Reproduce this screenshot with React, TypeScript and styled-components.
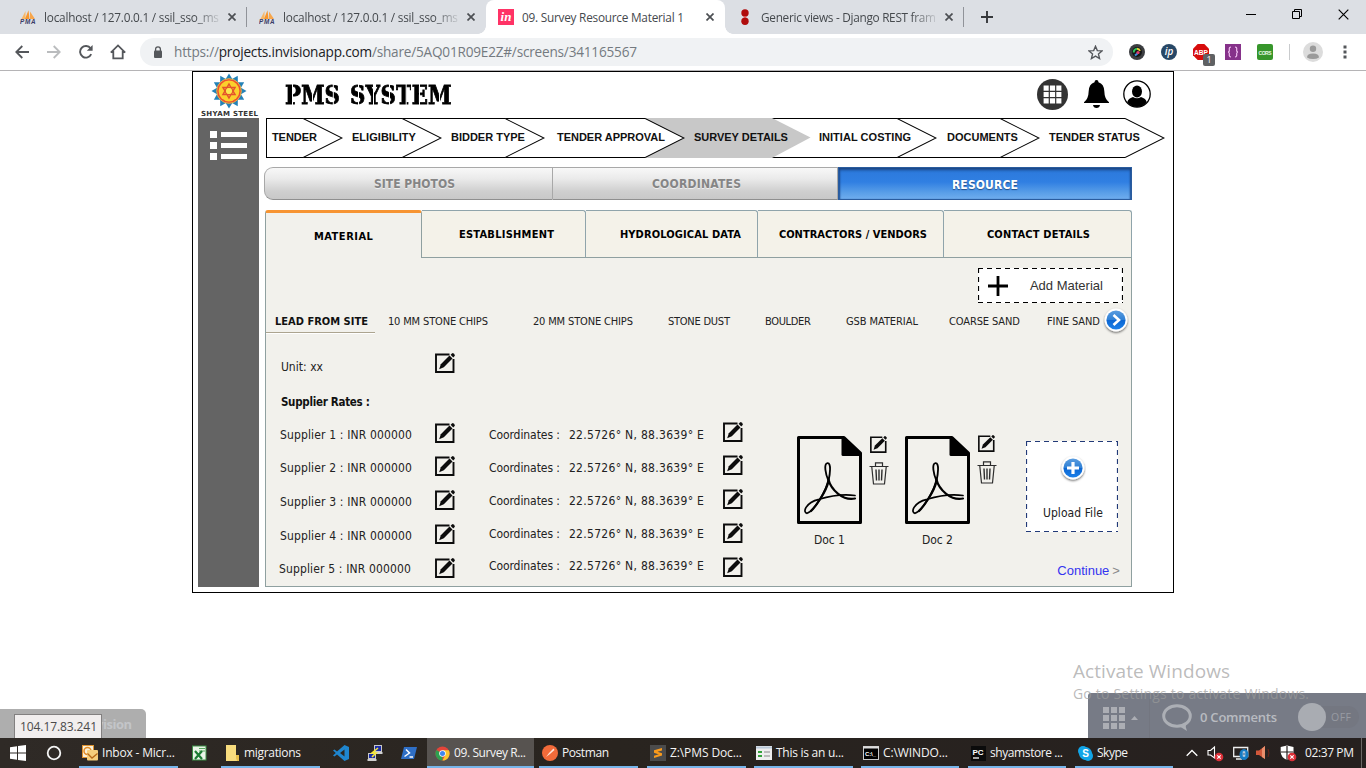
import React, { useLayoutEffect, useRef, useState } from "react";
import styled, { createGlobalStyle, css } from "styled-components";

const GlobalStyle = createGlobalStyle`
  * { box-sizing: border-box; }
  body { margin: 0; background: #fff; overflow: hidden; }
  svg { display: block; flex: none; }
`;

const UI = `"Open Sans", "Noto Sans", sans-serif`;
const TAHOMA = `"DejaVu Sans Condensed", "DejaVu Sans", sans-serif`;
const ARIAL = `"Liberation Sans", Arial, sans-serif`;

/* ---------- text that keeps a fixed run length ---------- */

const Run = styled.span<{ $font: string; $size: number; $weight?: number; $color?: string; $shadow?: string }>`
  display: inline-block;
  width: max-content;
  white-space: pre;
  flex: none;
  font-family: ${(p) => p.$font};
  font-size: ${(p) => p.$size}px;
  font-weight: ${(p) => p.$weight ?? 400};
  color: ${(p) => p.$color ?? "#222"};
  line-height: 16px;
  ${(p) => p.$shadow && css`text-shadow: ${p.$shadow};`}
  ${(p) => p.$font === TAHOMA && css`font-stretch: condensed;`}
`;

type FitProps = {
  w: number;
  children: React.ReactNode;
  font?: string;
  size?: number;
  weight?: number;
  color?: string;
  shadow?: string;
};

function Fit({ w, children, font = TAHOMA, size = 12, weight, color, shadow }: FitProps) {
  const ref = useRef<HTMLSpanElement>(null);
  const [spacing, setSpacing] = useState(0);
  useLayoutEffect(() => {
    const el = ref.current;
    if (!el) return;
    const chars = (el.textContent ?? "").length;
    setSpacing((w - el.getBoundingClientRect().width) / Math.max(1, chars - 1));
  }, [w]);
  return (
    <Run
      ref={ref}
      $font={font}
      $size={size}
      $weight={weight}
      $color={color}
      $shadow={shadow}
      style={{ letterSpacing: spacing, marginRight: -spacing }}
    >
      {children}
    </Run>
  );
}

/* ---------- browser chrome ---------- */

const Screen = styled.div`
  position: relative;
  display: flex;
  flex-direction: column;
  width: 1366px;
  height: 768px;
  overflow: hidden;
  background: #fff;
`;

const TabStrip = styled.div`
  display: flex;
  height: 34px;
  padding-left: 8px;
  background: #dcdfe4;
`;

const Tab = styled.div<{ $active?: boolean; $sep?: boolean }>`
  position: relative;
  display: flex;
  align-items: center;
  width: 239px;
  height: 34px;
  padding: 0 0 0 12px;
  ${(p) =>
    p.$active &&
    css`
      background: #fff;
      border-radius: 8px 8px 0 0;
      &::before,
      &::after {
        content: "";
        position: absolute;
        bottom: 0;
        width: 8px;
        height: 8px;
      }
      &::before {
        left: -8px;
        background: radial-gradient(circle at 0 0, #dcdfe4 7.5px, #fff 8px);
      }
      &::after {
        right: -8px;
        background: radial-gradient(circle at 100% 0, #dcdfe4 7.5px, #fff 8px);
      }
    `}
  ${(p) =>
    p.$sep &&
    css`
      &::after {
        content: "";
        position: absolute;
        right: 0;
        top: 7px;
        width: 1px;
        height: 20px;
        background: #909399;
      }
    `}
`;

const TabTitle = styled.div<{ $fade?: boolean }>`
  width: 176px;
  margin-left: 8px;
  height: 18px;
  ${(p) => p.$fade && css`mask-image: linear-gradient(90deg, #000 150px, transparent 179px);`}
`;

const CloseX = styled.div`
  width: 16px;
  margin-left: 4px;
  display: flex;
  justify-content: center;
`;

const NewTab = styled.div`
  width: 46px;
  display: flex;
  align-items: center;
  justify-content: center;
`;

const WindowControls = styled.div`
  display: flex;
  margin-left: auto;
  height: 28px;
  align-items: center;
`;

const WindowButton = styled.div`
  width: 46px;
  display: flex;
  justify-content: center;
`;

const Toolbar = styled.div`
  display: flex;
  align-items: center;
  height: 37px;
  padding: 0 0 0 6px;
  background: #fff;
  border-bottom: 1px solid #b5b4b6;
`;

const ToolButton = styled.div<{ $w?: number }>`
  width: ${(p) => p.$w ?? 32}px;
  display: flex;
  justify-content: center;
  flex: none;
`;

const Omnibox = styled.div`
  display: flex;
  align-items: center;
  width: 973px;
  height: 28px;
  margin-left: 6px;
  padding: 0 10px 0 13px;
  border-radius: 14px;
  background: #f0f2f4;
`;

const Url = styled.div`
  flex: 1;
  margin-left: 11px;
  & b {
    font-weight: 400;
    color: #202124;
  }
`;

const Extension = styled.div`
  position: relative;
  display: flex;
  justify-content: center;
  width: 32px;
`;

const RoundExt = styled.div<{ $bg: string }>`
  width: 16px;
  height: 16px;
  border-radius: 50%;
  background: ${(p) => p.$bg};
  color: #fff;
  font: italic 600 10px/15px ${UI};
  text-align: center;
`;

const CountBadge = styled.div`
  position: absolute;
  left: 18px;
  top: 10px;
  width: 12px;
  height: 12px;
  border-radius: 2px;
  background: #5f6163;
  color: #fff;
  font: 9px/12px ${UI};
  text-align: center;
`;

const VRule = styled.div<{ $h: number; $color: string }>`
  width: 1px;
  height: ${(p) => p.$h}px;
  background: ${(p) => p.$color};
`;

const Avatar = styled.div`
  width: 20px;
  height: 20px;
  border-radius: 50%;
  background: #dcdcdc;
`;

const PmaIcon = () => (
  <svg width="16" height="16" viewBox="0 0 16 16">
    <path d="M1.5 10 5.5 2v8z" fill="#f8b766" />
    <path d="M5 10 8.5 1.2 9.5 10z" fill="#f8962c" />
    <path d="M10 10V2.5L15 10z" fill="#f7a64c" />
    <text x="0" y="15" fontFamily={ARIAL} fontSize="6.3" fontStyle="italic" fontWeight="700" textLength="15.5" fill="#3b3b66">
      PMA
    </text>
  </svg>
);

const InvisionIcon = () => (
  <svg width="16" height="16" viewBox="0 0 16 16">
    <rect width="16" height="16" fill="#ff3366" />
    <text x="2.6" y="12" fontFamily={`"Liberation Serif", serif`} fontStyle="italic" fontWeight="700" fontSize="13" textLength="11" fill="#fff">
      in
    </text>
  </svg>
);

const DjangoRestIcon = () => (
  <svg width="16" height="16" viewBox="0 0 16 16">
    <circle cx="8" cy="4" r="3.7" fill="#b00c0c" />
    <circle cx="8" cy="12.2" r="3.7" fill="#b00c0c" />
    <rect x="7" y="7" width="2" height="2" fill="#d55" />
  </svg>
);

const Cross = ({ size = 8, color = "#4c4f53", stroke = 1.7 }) => (
  <svg width={size} height={size} viewBox="0 0 8 8">
    <path d="M.5.5l7 7M7.5.5l-7 7" stroke={color} strokeWidth={stroke} fill="none" />
  </svg>
);

type TabData = { icon: React.ReactNode; title: string; w: number; active?: boolean; sep?: boolean; fade?: boolean };

const tabs: TabData[] = [
  { icon: <PmaIcon />, title: "localhost / 127.0.0.1 / ssil_sso_ms", w: 175, sep: true, fade: true },
  { icon: <PmaIcon />, title: "localhost / 127.0.0.1 / ssil_sso_ms", w: 175, fade: true },
  { icon: <InvisionIcon />, title: "09. Survey Resource Material 1", w: 162, active: true },
  { icon: <DjangoRestIcon />, title: "Generic views - Django REST fram", w: 175, sep: true, fade: true },
];

const Browser = () => (
  <>
    <TabStrip>
      {tabs.map((t, i) => (
        <Tab key={i} $active={t.active} $sep={t.sep}>
          {t.icon}
          <TabTitle $fade={t.fade}>
            <Fit w={t.w} font={UI} size={11.8} color="#45494d">{t.title}</Fit>
          </TabTitle>
          <CloseX><Cross /></CloseX>
        </Tab>
      ))}
      <NewTab>
        <svg width="12" height="12" viewBox="0 0 12 12"><path d="M6 0v12M0 6h12" stroke="#36383b" strokeWidth="1.9" /></svg>
      </NewTab>
      <WindowControls>
        <WindowButton><svg width="10" height="10"><path d="M0 5.5h10" stroke="#000" /></svg></WindowButton>
        <WindowButton>
          <svg width="10" height="10"><path d="M.5 2.5h7v7h-7zM2.5 2.5v-2h7v7h-2" fill="none" stroke="#000" /></svg>
        </WindowButton>
        <WindowButton><Cross size={11} color="#000" stroke={0.85} /></WindowButton>
      </WindowControls>
    </TabStrip>
    <Toolbar>
      <ToolButton>
        <svg width="14" height="14" viewBox="0 0 14 14"><path d="M14 7H1.5M7.3 1 1.3 7l6 6" fill="none" stroke="#54575b" strokeWidth="1.8" /></svg>
      </ToolButton>
      <ToolButton>
        <svg width="14" height="14" viewBox="0 0 14 14"><path d="M0 7h12.5M6.7 1l6 6-6 6" fill="none" stroke="#babcbe" strokeWidth="1.8" /></svg>
      </ToolButton>
      <ToolButton>
        <svg width="14" height="14" viewBox="0 0 14 14">
          <path d="M12.2 9.2A5.8 5.8 0 1 1 11.6 3.4" fill="none" stroke="#54575b" strokeWidth="1.9" />
          <path d="M13.6 0v5.8H7.8z" fill="#54575b" />
        </svg>
      </ToolButton>
      <ToolButton>
        <svg width="16" height="16" viewBox="0 0 16 16">
          <path d="M.8 8.6 8 1.4l7.2 7.2M3.3 7v7.4h9.4V7M1.5 8.2h2.6M12 8.2h2.6" fill="none" stroke="#54575b" strokeWidth="1.8" />
        </svg>
      </ToolButton>
      <Omnibox>
        <svg width="10" height="13" viewBox="0 0 10 13">
          <rect x="1" y="4.6" width="8" height="7.4" rx="1" fill="#54575b" />
          <path d="M2.6 5V3.2a2.4 2.4 0 0 1 4.8 0V5" fill="none" stroke="#54575b" strokeWidth="1.3" />
        </svg>
        <Url>
          <Fit w={463} font={UI} size={13.6} color="#747a80">
            https://<b>projects.invisionapp.com</b>/share/5AQ01R09E2Z#/screens/341165567
          </Fit>
        </Url>
        <svg width="15" height="15" viewBox="0 0 24 24">
          <path d="M12 2l2.9 6.9 7.5.6-5.7 4.9 1.8 7.3L12 17.8l-6.5 3.9 1.8-7.3L1.6 9.5l7.5-.6z" fill="none" stroke="#54575b" strokeWidth="2.2" />
        </svg>
      </Omnibox>
      <ToolButton $w={8} />
      <Extension>
        <svg width="16" height="16" viewBox="0 0 16 16">
          <circle cx="8" cy="8" r="8" fill="#3b3d40" />
          <circle cx="8" cy="8" r="5" fill="#161616" />
          <path d="M4.8 8.5A3.3 3.3 0 0 1 8 4.8" stroke="#2fc35c" strokeWidth="2" fill="none" />
          <path d="M8 4.8a3.3 3.3 0 0 1 3 2" stroke="#e9d33a" strokeWidth="2" fill="none" />
          <path d="M8.5 9.5 6 11.5" stroke="#3a8de0" strokeWidth="2" />
          <circle cx="9" cy="8.5" r="1.6" fill="#df3c72" />
        </svg>
      </Extension>
      <Extension><RoundExt $bg="#274766">ip</RoundExt></Extension>
      <Extension>
        <svg width="16" height="16" viewBox="0 0 16 16">
          <path d="M4.7 0h6.6L16 4.7v6.6L11.3 16H4.7L0 11.3V4.7z" fill="#d70c0c" />
          <text x="1" y="10.6" fontFamily={ARIAL} fontWeight="700" fontSize="7.5" textLength="14" lengthAdjust="spacingAndGlyphs" fill="#fff">ABP</text>
        </svg>
        <CountBadge>1</CountBadge>
      </Extension>
      <Extension>
        <svg width="16" height="16" viewBox="0 0 16 16">
          <rect width="16" height="16" fill="#86328a" />
          <path d="M6 3q-2 0-1.7 2.5T3 8q1.6.2 1.3 2.5T6 13M10 3q2 0 1.7 2.5T13 8q-1.6.2-1.3 2.5T10 13" fill="none" stroke="#f0bff0" strokeWidth="1.2" />
        </svg>
      </Extension>
      <Extension>
        <svg width="16" height="16" viewBox="0 0 16 16">
          <rect width="16" height="16" rx="2" fill="#37962b" />
          <text x="1.5" y="10.5" fontFamily={ARIAL} fontWeight="700" fontSize="5" textLength="13" fill="#e8f7e2">CORS</text>
        </svg>
      </Extension>
      <ToolButton $w={17}><VRule $h={16} $color="#c9cbcd" /></ToolButton>
      <ToolButton $w={29}>
        <Avatar>
          <svg width="20" height="20" viewBox="0 0 20 20">
            <circle cx="10" cy="6.7" r="3.2" fill="#9a9a9a" />
            <path d="M4 15.5q0-4 6-4t6 4q-2.4 1.6-6 1.6t-6-1.6z" fill="#9a9a9a" />
          </svg>
        </Avatar>
      </ToolButton>
      <ToolButton $w={35}>
        <svg width="4" height="14"><path d="M.5.5h3v3h-3zM.5 5.5h3v3h-3zM.5 10.5h3v3h-3z" fill="#54575b" /></svg>
      </ToolButton>
    </Toolbar>
  </>
);

/* ---------- application ---------- */

const Frame = styled.div`
  display: flex;
  width: 982px;
  height: 522px;
  margin-left: 192px;
  border: 1px solid #000;
  background: #fff;
`;

const Rail = styled.div`
  display: flex;
  flex-direction: column;
  align-items: center;
  width: 63px;
  height: 515px;
  margin-left: 4px;
`;

const Logo = styled.div`
  display: flex;
  flex-direction: column;
  align-items: center;
  height: 46px;
  padding: 1px 0 0 2px;
`;

const LogoName = styled.div`
  display: flex;
  height: 9px;
  align-items: center;
`;

const Sidebar = styled.div`
  display: flex;
  justify-content: center;
  width: 61px;
  flex: 1;
  padding-top: 13px;
  background: #646464;
`;

const Main = styled.div`
  display: flex;
  flex-direction: column;
  width: 910px;
  margin-left: 4px;
`;

const Header = styled.header`
  display: flex;
  align-items: center;
  height: 46px;
  padding: 0 24px 2px 21px;
`;

const Title = styled.h1`
  display: flex;
  margin: 0;
  flex: 1;
  padding-top: 2px;
  font-family: "DejaVu Serif Condensed", "DejaVu Serif", serif;
  font-stretch: condensed;
  font-size: 26px;
  font-weight: 700;
  line-height: 32px;
  transform: scaleX(0.91);
  transform-origin: 0 0;
`;

const StencilLetter = styled.span<{ $cut: number; $lead?: number }>`
  margin-left: ${(p) => p.$lead ?? 0}px;
  color: transparent;
  -webkit-text-stroke: 0.8px transparent;
  background: linear-gradient(90deg, #000 ${(p) => p.$cut}px, #fff ${(p) => p.$cut}px ${(p) => p.$cut + 1}px, #000 ${(p) => p.$cut + 1}px);
  background-clip: text;
  -webkit-background-clip: text;
`;

const HeaderIcons = styled.div`
  display: flex;
  align-items: center;
`;

const HeaderIcon = styled.div<{ $w: number }>`
  display: flex;
  justify-content: center;
  width: ${(p) => p.$w}px;
`;

const Pipeline = styled.nav`
  display: flex;
  height: 40px;
  margin-left: 2px;
`;

const Step = styled.div<{ $w: number; $pad: number; $current?: boolean; $first?: boolean; $z: number }>`
  position: relative;
  z-index: ${(p) => p.$z};
  display: flex;
  align-items: center;
  width: ${(p) => p.$w}px;
  height: 40px;
  padding: 0 0 3px ${(p) => p.$pad}px;
  background: ${(p) => (p.$current ? "#c8c8c8" : "#fff")};
  border: 0 solid #000;
  border-width: ${(p) => (p.$current ? "0" : "1px 0")};
  ${(p) => p.$first && css`border-left-width: 1px;`}
`;

const Tip = styled.svg<{ $current?: boolean }>`
  position: absolute;
  right: -40px;
  top: ${(p) => (p.$current ? 0 : -1)}px;
`;

const StepLabel = styled.div`
  position: relative;
  z-index: 2;
  display: flex;
`;

const steps = [
  { label: "TENDER", w: 37, pad: 5, tw: 45 },
  { label: "ELIGIBILITY", w: 99, pad: 49, tw: 64 },
  { label: "BIDDER TYPE", w: 103, pad: 49, tw: 74 },
  { label: "TENDER APPROVAL", w: 140, pad: 52, tw: 108 },
  { label: "SURVEY DETAILS", w: 127, pad: 49, tw: 94, current: true },
  { label: "INITIAL COSTING", w: 125, pad: 47, tw: 92 },
  { label: "DOCUMENTS", w: 103, pad: 50, tw: 71 },
  { label: "TENDER STATUS", w: 125, pad: 49, tw: 91 },
];

const Segments = styled.div`
  display: flex;
  width: 868px;
  height: 33px;
  margin-top: 9px;
`;

const Segment = styled.div<{ $w: number; $active?: boolean; $first?: boolean; $dx?: number }>`
  display: flex;
  align-items: center;
  justify-content: center;
  width: ${(p) => p.$w}px;
  padding-left: ${(p) => p.$dx ?? 0}px;
  ${(p) =>
    p.$active
      ? css`
          padding-top: 2px;
          background: linear-gradient(#2b79dc 0, #307fe2 45%, #5a9fe8 80%, #6fadee 100%);
          box-shadow: inset 0 3px 3px -1px #1b437f, inset 2px 0 2px -1px #1d4f95, inset -2px 0 2px -1px #1d4f95;
          border: 1px solid #2a5c9e;
        `
      : css`
          background: linear-gradient(#f8f8f8 0, #eaeaea 35%, #cfcfcf 75%, #c8c8c8 100%);
          border: 1px solid #a8a8a8;
          border-bottom-color: #8f8f8f;
          border-left-width: ${p.$first ? 1 : 0}px;
          border-radius: ${p.$first ? "9px 0 0 9px" : "0"};
        `}
`;

const PanelTabs = styled.div`
  display: flex;
  height: 48px;
  margin: 10px 0 0 1px;
`;

const PanelTab = styled.div<{ $w: number; $active?: boolean; $dx?: number }>`
  display: flex;
  align-items: center;
  justify-content: center;
  width: ${(p) => p.$w}px;
  padding-left: ${(p) => p.$dx ?? 0}px;
  ${(p) =>
    p.$active
      ? css`
          background: #f2f1ec;
          border: 1px solid #8fa0a0;
          border-top: 3px solid #f79432;
          border-bottom: 0;
          border-radius: 3px 3px 0 0;
          padding-top: 3px;
        `
      : css`
          padding-top: 2px;
          background: #f4f2e9;
          border: 1px solid #8fa4ab;
          border-left: 0;
          border-top-right-radius: 3px;
          border-bottom-color: #8fa0a0;
        `}
`;

const Panel = styled.section`
  display: flex;
  flex-direction: column;
  width: 867px;
  height: 329px;
  margin-left: 1px;
  background: #f2f1ec;
  border: 1px solid #8fa0a0;
  border-top: 0;
`;

const DashedBox = styled.div`
  position: relative;
  background: #fff;
  & > svg:first-child {
    position: absolute;
    inset: 0;
  }
`;

const AddMaterial = styled(DashedBox)`
  display: flex;
  align-items: center;
  align-self: flex-end;
  width: 145px;
  height: 35px;
  margin: 10px 8px 0 0;
  padding: 1px 0 0 10px;
  gap: 22px;
`;

const Materials = styled.div`
  display: flex;
  height: 30px;
`;

const MaterialItem = styled.div<{ $lead: number }>`
  display: flex;
  align-items: flex-start;
  margin-left: ${(p) => p.$lead}px;
  padding-top: 11px;
`;

const CurrentMaterial = styled.div`
  display: flex;
  align-items: flex-start;
  width: 109px;
  padding: 11px 0 0 9px;
  border-bottom: 1px solid #aca48f;
  box-shadow: 0 1px 0 #fff;
`;

const NextButton = styled.div`
  margin: 4px 0 0 3px;
`;

const UnitRow = styled.div`
  display: flex;
  align-items: center;
  height: 20px;
  margin: 20px 0 0 15px;
`;

const UnitLabel = styled.div`
  display: flex;
  width: 154px;
  padding-top: 8px;
`;

const RatesHeading = styled.div`
  display: flex;
  margin: 21px 0 0 15px;
  height: 16px;
`;

const RatesArea = styled.div`
  display: flex;
  align-items: flex-start;
  height: 177px;
`;

const Stack = styled.div<{ $lead: number; $top: number; $rows: string; $w?: number }>`
  display: grid;
  grid-template-rows: ${(p) => p.$rows};
  align-items: start;
  width: ${(p) => p.$w}px;
  margin-left: ${(p) => p.$lead}px;
  padding-top: ${(p) => p.$top}px;
  flex: none;
`;

const SupplierRate = styled.div<{ $indent: number }>`
  display: flex;
  padding-left: ${(p) => p.$indent}px;
`;

const Coordinate = styled.div`
  display: flex;
  justify-content: space-between;
`;

const DocCard = styled.div<{ $lead: number }>`
  display: flex;
  width: 93px;
  margin: 26px 0 0 ${(p) => p.$lead}px;
  flex: none;
`;

const DocFile = styled.div`
  display: flex;
  flex-direction: column;
  align-items: center;
  width: 65px;
  gap: 8px;
`;

const DocActions = styled.div<{ $up?: boolean }>`
  display: flex;
  flex-direction: column;
  align-items: center;
  gap: 9px;
  width: 20px;
  margin: ${(p) => (p.$up ? -1 : 0)}px 0 0 7px;
`;

const UploadColumn = styled.div`
  display: flex;
  flex-direction: column;
  align-items: flex-end;
  margin: 31px 0 0 28px;
  flex: none;
`;

const Upload = styled(DashedBox)`
  display: flex;
  flex-direction: column;
  align-items: center;
  justify-content: space-between;
  width: 92px;
  height: 91px;
  padding: 14px 0 11px 2px;
`;

const Continue = styled.div`
  display: flex;
  align-items: center;
  gap: 3px;
  margin: 31px -2px 0 0;
`;

const SunLogo = () => {
  const rays = Array.from({ length: 12 }, (_, i) => i * 30);
  return (
    <svg width="36" height="36" viewBox="-18 -18 36 36">
      {rays.map((a) => (
        <path key={a} d="M-3.6 -11.5 0 -17.5 3.6 -11.5z" fill="#2482b8" transform={`rotate(${a})`} />
      ))}
      <circle r="12.3" fill="#ee4e30" stroke="#dbb54a" strokeWidth="1" />
      <circle r="10.4" fill="#fbd02c" />
      <path d="M0-7 6 3.500H-6zM0 7 6-3.500H-6z" fill="none" stroke="#e4522c" strokeWidth="1.5" />
      <circle r="3" fill="#fbe650" />
    </svg>
  );
};

const EditIcon = ({ size = 20 }: { size?: number }) => (
  <svg width={size} height={size} viewBox="0 0 20 20">
    <path d="M14.500 1.500H1v17.500h17.500V6" fill="none" stroke="#0c0c0c" strokeWidth="1.900" />
    <path d="M5.800 11.300 14.500 2.600l3 3L8.800 14.300l-4.600 2z" fill="#0c0c0c" />
    <path d="M15.600 1.800 17 .4q.8-.6 1.600.1l.9.9q.7.900.1 1.600L18.200 4.400z" fill="#0c0c0c" />
  </svg>
);

const TrashIcon = () => (
  <svg width="20" height="23" viewBox="0 0 20 23">
    <g fill="none" stroke="#2d2d2d" strokeWidth="1.2">
      <path d="M.5 4.500h19M6.500 4V.8h7V4M2.800 5l1.700 17h11l1.700-17" />
      <path d="M7 7.500l.5 11M10 7.500v11M13 7.500l-.5 11" strokeWidth="1.4" />
    </g>
  </svg>
);

const PdfIcon = () => (
  <svg width="65" height="88" viewBox="0 0 65 88">
    <path d="M1.500 1.500H47L63.500 17v69.500h-62z" fill="none" stroke="#000" strokeWidth="3" strokeLinejoin="round" />
    <path d="M44.500 1H47.500L64 18v2H46q-1.500 0-1.500-1.500z" fill="#000" />
    <g fill="none" stroke="#000" strokeLinecap="round">
      <path d="M31.500 45C28.500 38 26.500 27.500 30.500 27.200S33 38 31.500 45" strokeWidth="1.8" />
      <path d="M31.500 43C29.500 55 17 75 10 77.300C5.500 77 8 66.500 22 63.300C36 59 48 58 58 59.500" strokeWidth="1.7" />
      <path d="M31.300 43C34 54 46 65 58 62.500" strokeWidth="2.2" />
      <path d="M31 47C29 55 20 69 14 75" strokeWidth="2.3" />
    </g>
  </svg>
);

const BlueCircle = ({ children, id }: { children: React.ReactNode; id: string }) => (
  <svg width="26" height="28" viewBox="-13 -13 26 28">
    <defs>
      <linearGradient id={id} x1="0" y1="0" x2="0" y2="1">
        <stop offset="0" stopColor="#5b9ddf" />
        <stop offset=".48" stopColor="#2f80d5" />
        <stop offset=".52" stopColor="#0d67d2" />
        <stop offset="1" stopColor="#1b80ea" />
      </linearGradient>
      <filter id={`${id}-shadow`} x="-30%" y="-30%" width="160%" height="160%">
        <feDropShadow dx="0" dy="1.2" stdDeviation="1" floodOpacity=".6" />
      </filter>
    </defs>
    <circle r="11.4" fill="#fff" filter={`url(#${id}-shadow)`} />
    <circle r="9.6" fill={`url(#${id})`} />
    {children}
  </svg>
);

const rows = [1, 2, 3, 4, 5];

const Application = () => (
  <Frame>
    <Rail>
      <Logo>
        <SunLogo />
        <LogoName><Fit w={57} font={`"DejaVu Sans", sans-serif`} size={7} weight={700} color="#333">SHYAM STEEL</Fit></LogoName>
      </Logo>
      <Sidebar>
        <svg width="37" height="29">
          <path d="M0 0h7v7H0zM11 1h26v5H11zM0 11h7v7H0zM11 12h26v5H11zM0 22h7v7H0zM11 23h26v5H11z" fill="#fff" />
        </svg>
      </Sidebar>
    </Rail>
    <Main>
      <Header>
        <Title aria-label="PMS SYSTEM">
          <StencilLetter $cut={8}>P</StencilLetter>
          <StencilLetter $cut={12}>M</StencilLetter>
          <StencilLetter $cut={9}>S</StencilLetter>
          <StencilLetter $cut={9} $lead={11}>S</StencilLetter>
          <StencilLetter $cut={9}>Y</StencilLetter>
          <StencilLetter $cut={9}>S</StencilLetter>
          <StencilLetter $cut={11}>T</StencilLetter>
          <StencilLetter $cut={8}>E</StencilLetter>
          <StencilLetter $cut={12}>M</StencilLetter>
        </Title>
        <HeaderIcons>
          <HeaderIcon $w={31}>
            <svg width="31" height="31" viewBox="0 0 31 31">
              <circle cx="15.5" cy="15.5" r="15.5" fill="#333" />
              <path d="M6 6h19v19H6zM12.300 6v19M18.700 6v19M6 12.300h19M6 18.700h19" fill="#fff" stroke="#333" strokeWidth="1.2" />
            </svg>
          </HeaderIcon>
          <HeaderIcon $w={57}>
            <svg width="25" height="28" viewBox="0 0 25 28">
              <path d="M12.500 0q2 0 2 2.200Q20 4 20.300 11q.2 8 4.700 11.200V23H0v-.8Q4.500 19 4.700 11 5 4 10.500 2.200q0-2.200 2-2.200z" fill="#000" />
              <path d="M9 25h7q-.5 3-3.500 3T9 25z" fill="#000" />
            </svg>
          </HeaderIcon>
          <HeaderIcon $w={24}>
            <svg width="28" height="28" viewBox="0 0 28 28">
              <circle cx="14" cy="14" r="13.2" fill="#fff" stroke="#000" strokeWidth="1.3" />
              <ellipse cx="14" cy="11.5" rx="5" ry="6" fill="#000" />
              <path d="M4.300 22Q5 18.500 10 17q4 2.500 8 0 5 1.500 5.700 5Q20 27 14 27t-9.700-5z" fill="#000" />
            </svg>
          </HeaderIcon>
        </HeaderIcons>
      </Header>
      <Pipeline>
        {steps.map((s, i) => (
          <Step key={s.label} $w={s.w} $pad={s.pad} $current={s.current} $first={i === 0} $z={20 - i}>
            <Tip width="40" height="40" $current={s.current}>
              {s.current ? (
                <path d="M0 0 38.500 19.500 0 40z" fill="#c8c8c8" />
              ) : (
                <>
                  <path d="M0 .5 39 20 0 39.500z" fill="#fff" />
                  <path d="M0 .5 39 20 0 39.500" fill="none" stroke="#000" strokeWidth="1.1" />
                </>
              )}
            </Tip>
            <StepLabel><Fit w={s.tw} font={ARIAL} size={11} weight={700} color="#111">{s.label}</Fit></StepLabel>
          </Step>
        ))}
      </Pipeline>
      <Segments>
        <Segment $w={289} $first $dx={12}><Fit w={81} weight={700} color="#858585" shadow="0 1px 0 #eee">SITE PHOTOS</Fit></Segment>
        <Segment $w={285} $dx={3}><Fit w={89} weight={700} color="#858585" shadow="0 1px 0 #eee">COORDINATES</Fit></Segment>
        <Segment $w={294} $active><Fit w={66} weight={700} color="#fff" shadow="0 1px 1px #234f87">RESOURCE</Fit></Segment>
      </Segments>
      <PanelTabs>
        <PanelTab $w={157} $active><Fit w={59} size={11} weight={700} color="#000">MATERIAL</Fit></PanelTab>
        <PanelTab $w={164} $dx={6}><Fit w={95} size={11} weight={700} color="#000">ESTABLISHMENT</Fit></PanelTab>
        <PanelTab $w={172} $dx={18}><Fit w={121} size={11} weight={700} color="#000">HYDROLOGICAL DATA</Fit></PanelTab>
        <PanelTab $w={186} $dx={5}><Fit w={148} size={11} weight={700} color="#000">CONTRACTORS / VENDORS</Fit></PanelTab>
        <PanelTab $w={188} $dx={2}><Fit w={103} size={11} weight={700} color="#000">CONTACT DETAILS</Fit></PanelTab>
      </PanelTabs>
      <Panel>
        <AddMaterial>
          <svg width="145" height="35"><path d="M0 .5h145M0 34.500h145M.5 0v35M144.500 0v35" fill="none" stroke="#000" strokeWidth="1.2" strokeDasharray="5 4" /></svg>
          <svg width="20" height="20"><path d="M10 0v20M0 10h20" stroke="#000" strokeWidth="2.8" /></svg>
          <Fit w={73} font={ARIAL} size={13} color="#333">Add Material</Fit>
        </AddMaterial>
        <Materials>
          <CurrentMaterial><Fit w={93} size={11} weight={700} color="#111">LEAD FROM SITE</Fit></CurrentMaterial>
          <MaterialItem $lead={13}><Fit w={100} size={11}>10 MM STONE CHIPS</Fit></MaterialItem>
          <MaterialItem $lead={45}><Fit w={100} size={11}>20 MM STONE CHIPS</Fit></MaterialItem>
          <MaterialItem $lead={35}><Fit w={62} size={11}>STONE DUST</Fit></MaterialItem>
          <MaterialItem $lead={35}><Fit w={46} size={11}>BOULDER</Fit></MaterialItem>
          <MaterialItem $lead={35}><Fit w={72} size={11}>GSB MATERIAL</Fit></MaterialItem>
          <MaterialItem $lead={31}><Fit w={71} size={11}>COARSE SAND</Fit></MaterialItem>
          <MaterialItem $lead={27}><Fit w={53} size={11}>FINE SAND</Fit></MaterialItem>
          <NextButton>
            <BlueCircle id="next"><path d="M-2.500-5 3 0-2.500 5" fill="none" stroke="#fff" strokeWidth="2.6" /></BlueCircle>
          </NextButton>
        </Materials>
        <UnitRow>
          <UnitLabel><Fit w={42}>Unit: xx</Fit></UnitLabel>
          <EditIcon />
        </UnitRow>
        <RatesHeading><Fit w={89} size={11.5} weight={700} color="#111">Supplier Rates :</Fit></RatesHeading>
        <RatesArea>
          <Stack $lead={13} $top={17} $rows="33px 34px 34px 33px 16px" $w={156}>
            {rows.map((n) => (
              <SupplierRate key={n} $indent={n === 5 ? 0 : 1}>
                <Fit w={132}>{`Supplier ${n} : INR 000000`}</Fit>
              </SupplierRate>
            ))}
          </Stack>
          <Stack $lead={0} $top={13} $rows="33px 34px 34px 34px 20px" $w={20}>
            {rows.map((n) => <EditIcon key={n} />)}
          </Stack>
          <Stack $lead={34} $top={17} $rows="33px 33px 33px 32px 16px" $w={215}>
            {rows.map((n) => (
              <Coordinate key={n}>
                <Fit w={71}>Coordinates :</Fit>
                <Fit w={135}>22.5726° N, 88.3639° E</Fit>
              </Coordinate>
            ))}
          </Stack>
          <Stack $lead={19} $top={12} $rows="33px 34px 34px 34px 20px" $w={20}>
            {rows.map((n) => <EditIcon key={n} />)}
          </Stack>
          <DocCard $lead={54}>
            <DocFile><PdfIcon /><Fit w={31} size={12}>Doc 1</Fit></DocFile>
            <DocActions><EditIcon size={17} /><TrashIcon /></DocActions>
          </DocCard>
          <DocCard $lead={15}>
            <DocFile><PdfIcon /><Fit w={31} size={12}>Doc 2</Fit></DocFile>
            <DocActions $up><EditIcon size={17} /><TrashIcon /></DocActions>
          </DocCard>
          <UploadColumn>
            <Upload>
              <svg width="92" height="91"><path d="M0 .5h92M0 90.500h92M.5 0v91M91.500 0v91" fill="none" stroke="#223a78" strokeWidth="1.2" strokeDasharray="5 4" /></svg>
              <BlueCircle id="upload"><path d="M0-6V6M-6 0H6" stroke="#fff" strokeWidth="3.2" /></BlueCircle>
              <Fit w={60} size={12}>Upload File</Fit>
            </Upload>
            <Continue>
              <Fit w={52} font={ARIAL} size={13} color="#3434f0">Continue</Fit>
              <Fit w={8} font={ARIAL} size={13} color="#888">{">"}</Fit>
            </Continue>
          </UploadColumn>
        </RatesArea>
      </Panel>
    </Main>
  </Frame>
);

/* ---------- overlays ---------- */

const BrandTab = styled.div`
  position: absolute;
  left: 0;
  top: 709px;
  display: flex;
  justify-content: flex-end;
  width: 146px;
  height: 29px;
  padding: 7px 14px 0 0;
  border-top-right-radius: 5px;
  background: #aeaeae;
`;

const StatusTip = styled.div`
  position: absolute;
  left: 14px;
  top: 714px;
  display: flex;
  align-items: flex-start;
  width: 88px;
  height: 24px;
  padding: 4px 0 0 5px;
  border: 1px solid #828080;
  border-bottom: 0;
  background: #f1eeee;
`;

const CommentBar = styled.div`
  position: absolute;
  right: 0;
  top: 693px;
  display: flex;
  align-items: center;
  width: 278px;
  height: 45px;
  padding-left: 15px;
  background: #777b86;
  border-top-left-radius: 3px;
`;

const BarMenu = styled.div`
  display: flex;
  align-items: center;
  gap: 6px;
  width: 47px;
  height: 45px;
  padding-top: 4px;
  border-right: 1px solid #737680;
`;

const BarComments = styled.div`
  display: flex;
  align-items: center;
  gap: 8px;
  width: 148px;
  padding: 3px 0 0 12px;
`;

const Toggle = styled.div`
  display: flex;
  align-items: center;
  gap: 5px;
  width: 61px;
  height: 22px;
  margin-top: 3px;
  border-radius: 11px;
  background: #747781;
`;

const Knob = styled.div`
  width: 28px;
  height: 28px;
  flex: none;
  border-radius: 50%;
  background: #a9acb2;
`;

const Watermark = styled.div`
  position: absolute;
  left: 1073px;
  top: 659px;
  display: flex;
  flex-direction: column;
  & span:first-child { line-height: 24px; }
  & span:last-child { line-height: 22px; }
`;

/* ---------- taskbar ---------- */

const Taskbar = styled.div`
  display: flex;
  align-items: center;
  height: 30px;
  margin-top: auto;
  background: linear-gradient(90deg, #2f2a26, #29241f 45%, #26201f);
`;

const Pinned = styled.div<{ $w: number }>`
  display: flex;
  justify-content: center;
  width: ${(p) => p.$w}px;
`;

const TaskItem = styled.div<{ $w: number; $lead: number; $pad: number; $active?: boolean }>`
  display: flex;
  align-items: center;
  gap: 4px;
  width: ${(p) => p.$w}px;
  height: 30px;
  margin-left: ${(p) => p.$lead}px;
  padding: 2px 0 0 ${(p) => p.$pad}px;
  border-bottom: 2px solid #76b5ea;
  background: ${(p) => (p.$active ? "#575350" : "transparent")};
`;

const Tray = styled.div`
  display: flex;
  align-items: center;
  height: 30px;
  flex: 1;
  padding-left: 13px;
`;

const TrayIcon = styled.div<{ $w: number }>`
  width: ${(p) => p.$w}px;
`;

const ShowDesktop = styled.div`
  width: 1px;
  height: 30px;
  margin-left: 7px;
  background: #6b6765;
`;

const TaskText = ({ w, children }: { w: number; children: string }) => (
  <Fit w={w} font={UI} size={12} color="#f4f4f4">{children}</Fit>
);

const RedCross = () => (
  <g transform="translate(12 12)">
    <circle r="4.3" fill="#dc3038" />
    <path d="M-1.700-1.700 1.700 1.700M1.700-1.700-1.700 1.700" stroke="#fff" strokeWidth="1.1" />
  </g>
);

const WindowsTaskbar = () => (
  <Taskbar>
    <Pinned $w={36}>
      <svg width="16" height="16"><path d="M0 2.300 7 1.300v6.200H0zM8 1.100 16 0v7.500H8zM0 8.500h7v6.200l-7-1zM8 8.500h8V16l-8-1.100z" fill="#fff" /></svg>
    </Pinned>
    <Pinned $w={36}><svg width="16" height="16"><circle cx="8" cy="8" r="6.3" fill="none" stroke="#f4f4f4" strokeWidth="1.8" /></svg></Pinned>
    <TaskItem $w={99} $lead={7} $pad={3}>
      <svg width="16" height="16">
        <rect x=".5" y=".5" width="11" height="12" fill="#f8efd9" stroke="#de9230" />
        <circle cx="5.5" cy="6" r="3.5" fill="none" stroke="#e28b24" strokeWidth="1.5" />
        <rect x="5" y="5" width="11" height="10.5" rx="1" fill="#f6cf7c" />
        <path d="M5.500 8.500l4.500 4.500 5.500-4.500" fill="none" stroke="#b76a18" strokeWidth="1.3" />
      </svg>
      <TaskText w={73}>Inbox - Micr...</TaskText>
    </TaskItem>
    <Pinned $w={42}>
      <svg width="16" height="16">
        <rect x="1.5" y="1" width="13.5" height="14" fill="#eaf5e8" stroke="#3c8d46" />
        <path d="M8 3.500h6M8 6h6" stroke="#58a95d" />
        <path d="M4 6l7 8M11 6l-7 8" stroke="#1c7c33" strokeWidth="2.2" />
      </svg>
    </Pinned>
    <TaskItem $w={99} $lead={1} $pad={4}>
      <svg width="15" height="16"><path d="M1 0h10v13h3v3H1z" fill="#f8dc7e" /><path d="M11 13v-3h3v6h-2z" fill="#e8bf4c" /></svg>
      <TaskText w={57}>migrations</TaskText>
    </TaskItem>
    <Pinned $w={42}>
      <svg width="16" height="16"><path d="M11.500 0 16 2v12l-4.500 2L4 9.500 1.500 11.500 0 10.500 2.800 8 0 5.500l1.500-1L4 6.500zM11.500 4.500 7 8l4.500 3.500z" fill="#1f86cf" fillRule="evenodd" /></svg>
    </Pinned>
    <Pinned $w={26}>
      <svg width="16" height="16">
        <rect x="7.5" y=".5" width="7" height="6" fill="#1a2ca8" stroke="#c8c8c8" />
        <path d="M6.500 8h9" stroke="#d0d0d0" strokeWidth="2" />
        <rect x="1.5" y="8.5" width="7" height="5" fill="#1a2ca8" stroke="#c8c8c8" />
        <path d="M.5 15h9" stroke="#d0d0d0" strokeWidth="2" />
        <path d="M11 3 5 8h4l-4 4" fill="none" stroke="#f6e735" strokeWidth="1.6" />
      </svg>
    </Pinned>
    <Pinned $w={42}>
      <svg width="18" height="14"><path d="M4 1h13l-3 12H1z" fill="#2f6fc6" /><path d="M6 3.500l3.500 3.500-5 3.500M9.500 11h3.500" fill="none" stroke="#fff" strokeWidth="1.5" /></svg>
    </Pinned>
    <TaskItem $w={107} $lead={-3} $pad={8} $active>
      <svg width="15" height="15" viewBox="-8 -8 16 16">
        <circle r="7.5" fill="#e4453a" />
        <path d="M0 0 -6.500-3.750A7.500 7.500 0 0 0 0 7.500z" fill="#2da04f" />
        <path d="M0-3.500H6.700A7.500 7.500 0 0 1 0 7.500L3 1.700z" fill="#fbc62e" />
        <circle r="3.5" fill="#fff" /><circle r="2.7" fill="#3f86ee" />
      </svg>
      <TaskText w={72}>09. Survey R...</TaskText>
    </TaskItem>
    <TaskItem $w={99} $lead={5} $pad={3}>
      <svg width="16" height="16"><circle cx="8" cy="8" r="8" fill="#f26b3a" /><path d="M4 12l3-4 4.500-4.500L12.500 5 8 9z" fill="#ffe5d8" /></svg>
      <TaskText w={47}>Postman</TaskText>
    </TaskItem>
    <TaskItem $w={99} $lead={9} $pad={3}>
      <svg width="16" height="16"><rect width="16" height="16" fill="#4b4b4b" /><path d="M12 3 4 5.300v2.400L12 10.500v-2.300L7.500 6.800 12 5.500zM4 13l8-2.500V8.200L4 10.700z" fill="#f99a1c" /></svg>
      <TaskText w={72}>Z:\PMS Doc...</TaskText>
    </TaskItem>
    <TaskItem $w={99} $lead={8} $pad={2}>
      <svg width="16" height="14">
        <rect width="16" height="14" fill="#eee" /><path d="M0 1.500h16" stroke="#b8c8d8" strokeWidth="2" />
        <path d="M2 6h4M2 10h4" stroke="#35a13b" strokeWidth="2" /><path d="M8 6h6M8 10h6" stroke="#888" />
      </svg>
      <TaskText w={68}>This is an u...</TaskText>
    </TaskItem>
    <TaskItem $w={98} $lead={8} $pad={2}>
      <svg width="16" height="14">
        <rect x=".5" y=".5" width="15" height="13" fill="#000" stroke="#c9c9c9" /><path d="M0 1.500h16" stroke="#dcdcdc" strokeWidth="2" />
        <text x="2" y="10" fontFamily={ARIAL} fontWeight="700" fontSize="6" textLength="11" fill="#fff">C:\_</text>
      </svg>
      <TaskText w={65}>C:\WINDO...</TaskText>
    </TaskItem>
    <TaskItem $w={98} $lead={9} $pad={3}>
      <svg width="15" height="15">
        <rect width="15" height="15" fill="#0b0b0b" />
        <text x="1.5" y="8.5" fontFamily={ARIAL} fontWeight="700" fontSize="8" textLength="11" fill="#fff">PC</text>
        <path d="M2 12h6" stroke="#fff" strokeWidth="1.3" />
      </svg>
      <TaskText w={73}>shyamstore ...</TaskText>
    </TaskItem>
    <TaskItem $w={98} $lead={9} $pad={3}>
      <svg width="15" height="15">
        <circle cx="5" cy="5" r="5" fill="#12a5e8" /><circle cx="10" cy="10" r="5" fill="#12a5e8" /><circle cx="7.5" cy="7.5" r="6.5" fill="#12a5e8" />
        <text x="4.3" y="11.2" fontFamily={ARIAL} fontWeight="700" fontSize="10" fill="#fff">S</text>
      </svg>
      <TaskText w={31}>Skype</TaskText>
    </TaskItem>
    <Tray>
      <TrayIcon $w={21}><svg width="12" height="8"><path d="M.7 6.800 6 1.500l5.300 5.300" fill="none" stroke="#fff" strokeWidth="1.3" /></svg></TrayIcon>
      <TrayIcon $w={26}>
        <svg width="17" height="17">
          <path d="M1 5.500h2.500L7.500 2v11L3.500 10H1z" fill="none" stroke="#fff" strokeWidth="1.1" />
          <RedCross />
        </svg>
      </TrayIcon>
      <TrayIcon $w={23}>
        <svg width="17" height="17">
          <path d="M.7 2.500h14v9H.7zM3 14h6" fill="none" stroke="#eee" strokeWidth="1.3" />
          <ellipse cx="11" cy="9.5" rx="4.5" ry="5.5" fill="#167cc4" />
          <path d="M11 6.500v5" stroke="#fff" strokeWidth="2.4" />
          <path d="M11 7.500v3" stroke="#134a80" strokeWidth="1.2" />
        </svg>
      </TrayIcon>
      <TrayIcon $w={24}>
        <svg width="16" height="16">
          <path d="M0 5.500h3L9 1v13L3 10H0z" fill="#d2573a" /><path d="M6 3.500 9 1v13l-3-2z" fill="#e98e6c" />
          <path d="M12 4q2 4 0 8" fill="none" stroke="#6b2318" />
        </svg>
      </TrayIcon>
      <TrayIcon $w={25}>
        <svg width="17" height="17">
          <path d="M7 .5 13.500 2v5q0 5-6.500 8Q.7 12 .7 7V2z" fill="#fff" /><path d="M7 1v14M.7 7h12.600" stroke="#26201f" strokeWidth="1.2" />
          <RedCross />
        </svg>
      </TrayIcon>
      <TaskText w={49}>02:37 PM</TaskText>
      <ShowDesktop />
    </Tray>
  </Taskbar>
);

export default function App() {
  return (
    <Screen>
      <GlobalStyle />
      <Browser />
      <Application />
      <BrandTab><Fit w={36} font={UI} size={13} weight={700} color="#c3c5c8">vision</Fit></BrandTab>
      <StatusTip><Fit w={77} font={UI} size={12} color="#4a4a4a">104.17.83.241</Fit></StatusTip>
      <CommentBar>
        <BarMenu>
          <svg width="22" height="22"><path d="M0 0h6v6H0zM8 0h6v6H8zM16 0h6v6h-6zM0 8h6v6H0zM8 8h6v6H8zM16 8h6v6h-6zM0 16h6v6H0zM8 16h6v6H8zM16 16h6v6h-6z" fill="#acaeb4" /></svg>
          <svg width="7" height="4"><path d="M3.500 0 7 4H0z" fill="#acaeb4" /></svg>
        </BarMenu>
        <BarComments>
          <svg width="30" height="27" viewBox="0 0 30 27">
            <ellipse cx="15" cy="12" rx="13.3" ry="10.3" fill="none" stroke="#acafb5" strokeWidth="3" />
            <path d="M17 22l8 5q-2-4-1-7z" fill="#acafb5" />
          </svg>
          <Fit w={77} font={UI} size={13} weight={600} color="#b9bbc1">0 Comments</Fit>
        </BarComments>
        <Toggle>
          <Knob />
          <Fit w={20} font={UI} size={10.5} color="#989ba3">OFF</Fit>
        </Toggle>
      </CommentBar>
      <Watermark>
        <Fit w={157} font={UI} size={19} color="rgba(150,150,150,.65)">Activate Windows</Fit>
        <Fit w={236} font={UI} size={14} color="rgba(155,155,155,.7)">Go to Settings to activate Windows.</Fit>
      </Watermark>
      <WindowsTaskbar />
    </Screen>
  );
}
